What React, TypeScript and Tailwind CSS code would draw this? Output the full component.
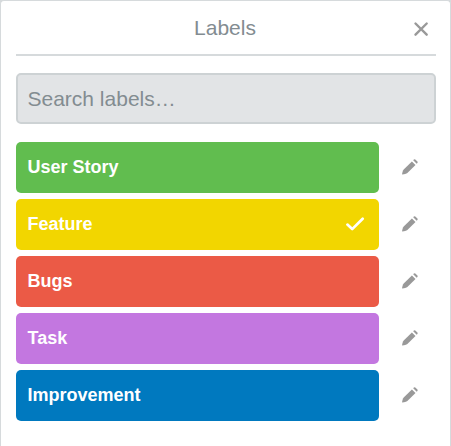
type Label = { name: string; color: string; selected?: boolean };

const labels: Label[] = [
  { name: "User Story", color: "bg-[#61bd4f]" },
  { name: "Feature", color: "bg-[#f2d600]", selected: true },
  { name: "Bugs", color: "bg-[#eb5a46]" },
  { name: "Task", color: "bg-[#c377e0]" },
  { name: "Improvement", color: "bg-[#0079bf]" },
];

function CloseIcon() {
  return (
    <svg width="16" height="16" viewBox="0 0 16 16" fill="none" stroke="#999" strokeWidth="2.4" strokeLinecap="round">
      <path d="M2.5 2.5 13.7 13.7M13.7 2.5 2.5 13.7" />
    </svg>
  );
}

function CheckIcon() {
  return (
    <svg width="20" height="16" viewBox="0 0 20 16" fill="none" stroke="#fff" strokeWidth="2.7" strokeLinecap="round" strokeLinejoin="round">
      <path d="M2.4 8.6 7.2 13.1 17.7 2.7" />
    </svg>
  );
}

function PencilIcon() {
  return (
    <svg width="16" height="16" viewBox="0 0 16 16" fill="#999">
      <path d="M9.9 2.4 13.5 6 5.4 13.9C4.4 14.7 2 15.3.6 15.4Q.1 15.4.1 14.9C.3 13.4 1 11.2 1.7 10.4Z" />
      <path d="M11.2 1.2 11.9.5Q12.6-.1 13.3.5L15.4 2.5Q16 3.2 15.4 3.9L14.7 4.7Z" />
    </svg>
  );
}

export default function App() {
  return (
    <div className="h-[446px] w-[451px] bg-[#d6dadc] font-['Liberation_Sans',Arial,sans-serif]">
      <section className="h-full rounded-t-[4px] border border-b-0 border-[#d6dadc] bg-white pl-[15px] pr-[14px]">
        <header className="flex h-[55px] items-center border-b-2 border-[#d6dadc]">
          <h2 className="flex-1 pl-[21px] text-center text-[21px] leading-[53px] text-[#838c91]">Labels</h2>
          <button aria-label="Close" className="mr-[7px] mt-[2px]">
            <CloseIcon />
          </button>
        </header>
        <input
          placeholder="Search labels…"
          className="mt-[17px] block h-[51px] w-full rounded-[5px] border-2 border-[#cdd2d4] bg-[#e2e4e6] px-[9.5px] text-[21px] text-[#838c91] outline-none placeholder:text-[#838c91]"
        />
        <ul className="mt-[18px] flex flex-col gap-[6px]">
          {labels.map((label) => (
            <li key={label.name} className="flex h-[51px] items-center">
              <div className={`flex h-full w-[363px] items-center justify-between rounded-[5px] pl-[11.5px] pr-[14px] text-[18px] font-bold text-white ${label.color}`}>
                <span>{label.name}</span>
                {label.selected && <span className="pb-px"><CheckIcon /></span>}
              </div>
              <button aria-label={`Edit ${label.name}`} className="ml-[23px] pb-px">
                <PencilIcon />
              </button>
            </li>
          ))}
        </ul>
      </section>
    </div>
  );
}
